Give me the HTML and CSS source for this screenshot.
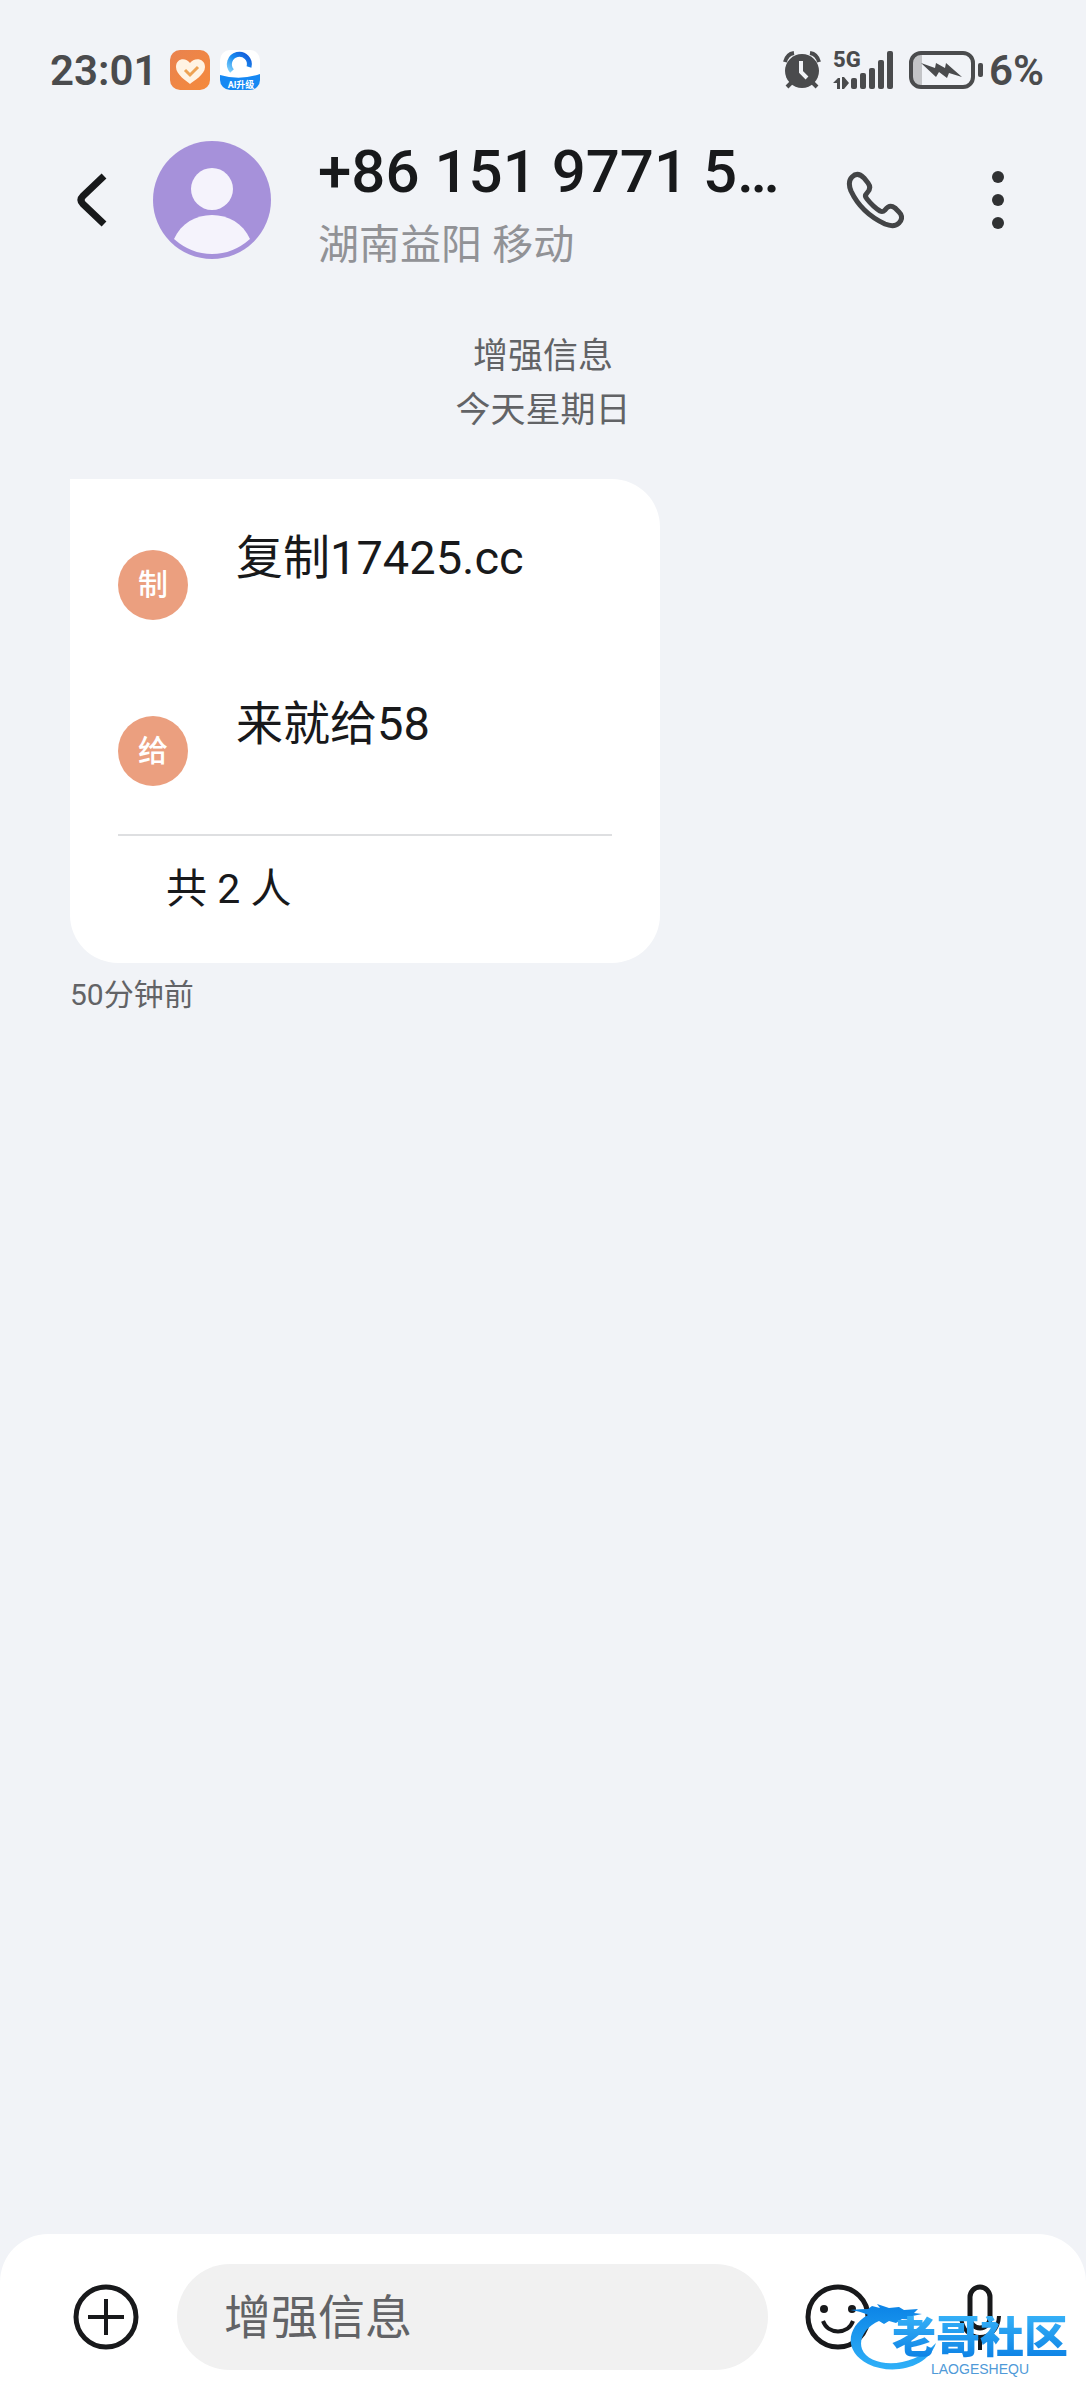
FILE: index.html
```html
<!DOCTYPE html>
<html lang="zh-CN">
<head>
<meta charset="utf-8">
<meta name="viewport" content="width=device-width, initial-scale=1">
<title>信息</title>
<link rel="stylesheet" href="styles.css">
</head>
<body>
<div class="screen">
  <div class="status">
    <span class="clock">23:01</span>
    <svg class="app-icon" width="40" height="40" viewBox="0 0 40 40" aria-hidden="true">
      <defs><linearGradient id="orange" x1="0" y1="0" x2="1" y2="1"><stop offset="0" stop-color="#e9824f"/><stop offset="1" stop-color="#f58a3c"/></linearGradient></defs>
      <rect width="40" height="40" rx="10" fill="url(#orange)"/>
      <path d="M20 34C17 31 6 25 6 17c0-9 10-10 14-4 4-6 15-5 15 4 0 8-12 14-15 17z" fill="#fff3e3"/>
      <path d="M15 20l5 5 8-8" fill="none" stroke="#eda253" stroke-width="3"/>
    </svg>
    <svg class="app-icon" width="40" height="40" viewBox="0 0 40 40" aria-hidden="true">
      <defs><clipPath id="tile"><rect width="40" height="40" rx="10"/></clipPath>
      <linearGradient id="ring" x1="0" y1="1" x2="1" y2="0"><stop offset="0" stop-color="#7fd0fb"/><stop offset=".5" stop-color="#1a8cf0"/><stop offset="1" stop-color="#1458d8"/></linearGradient></defs>
      <g clip-path="url(#tile)">
        <rect width="40" height="40" fill="#fff"/>
        <path d="M12 21A10 10 0 1 1 29 17" fill="none" stroke="url(#ring)" stroke-width="5"/>
        <path d="M0 25Q20 31 40 24V40H0z" fill="#1688f3"/>
        <text x="21" y="38" text-anchor="middle" class="tile-text">AI升级</text>
      </g>
    </svg>
    <span class="spacer"></span>
    <svg width="38" height="38" viewBox="0 0 38 38" aria-hidden="true">
      <circle cx="19" cy="20" r="17" fill="#4a4b4d"/>
      <path d="M2 11Q4 3 11 2M27 2q7 1 9 9M8 32l-4 4M30 32l4 4" stroke="#4a4b4d" stroke-width="4" fill="none"/>
      <path d="M18 10v11l6 6" stroke="#f1f3f7" stroke-width="4" fill="none"/>
    </svg>
    <div class="signal">
      <span class="net">5G</span>
      <svg width="62" height="38" viewBox="0 0 62 38" aria-hidden="true">
        <g fill="#4a4b4d"><path d="M0 32l5-5h2v11H4v-6zM9 26h2l5 6-5 6H9z"/>
        <rect x="18" y="27" width="6" height="11" rx="2"/><rect x="27" y="22" width="6" height="16" rx="2"/><rect x="36" y="17" width="6" height="21" rx="2"/><rect x="45" y="9" width="6" height="29" rx="2"/><rect x="54" y="0" width="6" height="38" rx="2"/></g>
      </svg>
    </div>
    <svg width="74" height="38" viewBox="0 0 74 38" aria-hidden="true">
      <path d="M4 4h9v30H4z" fill="#c3c4c7"/>
      <rect x="2" y="2" width="62" height="34" rx="10" fill="none" stroke="#4a4b4d" stroke-width="4"/>
      <path d="M12 12l14 5 1-5 9 5 1-5 16 14-13-4-2 5-8-6-3 5z" fill="#4a4b4d"/>
      <rect x="69" y="12" width="5" height="14" rx="2" fill="#4a4b4d"/>
    </svg>
    <span class="percent">6%</span>
  </div>

  <header class="header">
    <button class="icon-btn" aria-label="返回">
      <svg width="32" height="54" viewBox="0 0 32 54"><path d="M27 3L6 23q-4 4 0 8l21 20" fill="none" stroke="#18191b" stroke-width="7"/></svg>
    </button>
    <svg class="avatar" width="118" height="118" viewBox="0 0 118 118" aria-hidden="true">
      <circle cx="59" cy="59" r="59" fill="#a691da"/>
      <circle cx="59" cy="48" r="21" fill="#f5f3fc"/>
      <path d="M21 98C28 82 43 74 59 74s31 8 38 24Q80 113 59 113T21 98z" fill="#f5f3fc"/>
    </svg>
    <div class="contact">
      <h1 class="number">+86 151 9771 5…</h1>
      <p class="place">湖南益阳 移动</p>
    </div>
    <button class="icon-btn" aria-label="拨打电话">
      <svg width="58" height="58" viewBox="0 0 58 58"><path d="M6 6C10 2 14 3 18 7l4 5c3 4 2 7-1 10-2 2-2 4 0 6 4 5 8 9 13 12 2 1 3 1 5-1 3-4 6-5 10-2l4 4c4 4 3 8 0 11-4 4-9 3-14 1C24 46 12 35 5 20 3 15 2 10 6 6z" fill="none" stroke="#434446" stroke-width="5"/></svg>
    </button>
    <button class="icon-btn more" aria-label="更多">
      <svg width="12" height="58" viewBox="0 0 12 58" fill="#303133"><circle cx="6" cy="6" r="6"/><circle cx="6" cy="29" r="6"/><circle cx="6" cy="52" r="6"/></svg>
    </button>
  </header>

  <main class="thread">
    <div class="day"><p>增强信息</p><p>今天星期日</p></div>
    <section class="bubble">
      <ul class="people">
        <li class="person"><span class="badge">制</span><span class="name">复制17425.cc</span></li>
        <li class="person"><span class="badge">给</span><span class="name">来就给58</span></li>
      </ul>
      <p class="total">共 2 人</p>
    </section>
    <p class="ago">50分钟前</p>
  </main>

  <footer class="composer">
    <button class="icon-btn" aria-label="添加">
      <svg width="66" height="66" viewBox="0 0 66 66" fill="none" stroke="#18191b"><circle cx="33" cy="33" r="30" stroke-width="5"/><path d="M33 15v36M15 33h36" stroke-width="4"/></svg>
    </button>
    <input class="field" type="text" placeholder="增强信息" aria-label="增强信息">
    <button class="icon-btn" aria-label="表情">
      <svg width="66" height="66" viewBox="0 0 66 66"><circle cx="33" cy="33" r="30" fill="none" stroke="#18191b" stroke-width="5"/><circle cx="19" cy="25" r="4" fill="#18191b"/><circle cx="47" cy="25" r="4" fill="#18191b"/><path d="M18 37c5 14 25 14 30 0" fill="none" stroke="#18191b" stroke-width="4"/></svg>
    </button>
    <button class="icon-btn mic" aria-label="语音">
      <svg width="44" height="66" viewBox="0 0 44 66" fill="none" stroke="#18191b"><rect x="12" y="3" width="20" height="41" rx="10" stroke-width="5"/><path d="M3 32c1 28 37 28 38 0M22 52v14" stroke-width="4"/></svg>
    </button>
    <div class="mark">
      <svg class="swirl" width="90" height="72" viewBox="0 0 90 72" aria-hidden="true">
        <defs><linearGradient id="sea" x1="0" y1="0" x2="0" y2="1"><stop offset="0" stop-color="#0b83e6"/><stop offset="1" stop-color="#2fb0f8"/></linearGradient></defs>
        <path fill="url(#sea)" d="M0 8q10-1 18-1l4-3 8 2-3-4 12 4 10-1 5 3 14-1-4 4 8 1-14 3 6 3-12-1-6 4-7-2-5 3-5-3C17 24 8 36 12 47c7 18 48 22 74-6C78 66 42 74 18 62-8 48-2 24 18 13Q10 9 0 8z"/>
      </svg>
      <div class="mark-text"><span class="mark-name">老哥社区</span><span class="mark-sub">LAOGESHEQU</span></div>
    </div>
  </footer>
</div>
</body>
</html>
```
FILE: styles.css
```css
* { box-sizing: border-box; }
body, h1, p, ul { margin: 0; padding: 0; }
body {
  background: #f1f3f7;
  color: #18191b;
  font-family: Roboto, "Noto Sans CJK SC", sans-serif;
}
svg { display: block; flex: none; }
.screen { display: flex; flex-direction: column; min-height: 100vh; }

.status {
  display: flex;
  align-items: center;
  height: 100px;
  margin-top: 20px;
  padding: 0 42px 0 50px;
  color: #4a4b4d;
  font-size: 42px;
  font-weight: 600;
}
.clock { margin-right: 13px; }
.app-icon { margin-right: 10px; }
.tile-text { font-size: 9px; font-weight: 700; fill: #fff; }
.spacer { flex: 1; }
.signal { position: relative; margin: 0 14px 0 12px; }
.net { position: absolute; left: 0; top: -3px; font-size: 22px; line-height: 24px; font-weight: 800; }
.percent { margin-left: 6px; }

.icon-btn { flex: none; padding: 0; border: 0; background: none; cursor: pointer; }
.header {
  display: flex;
  align-items: center;
  height: 160px;
  padding: 0 82px 0 77px;
}
.avatar { margin: 0 47px 0 44px; }
.contact { flex: 1; min-width: 0; padding-top: 10px; }
.number {
  font-size: 60px;
  line-height: 72px;
  font-weight: 500;
  white-space: nowrap;
}
.place { margin-top: 7px; font-size: 41px; line-height: 60px; color: #919296; }
.more { margin-left: 88px; }

.thread { flex: 1; padding: 50px 70px 0; }
.day { text-align: center; font-size: 35px; line-height: 54px; color: #626366; }
.bubble {
  width: 590px;
  max-width: 100%;
  margin-top: 41px;
  padding: 23px 48px 44px;
  background: #fff;
  border-radius: 0 48px 48px 48px;
}
.people { list-style: none; border-bottom: 2px solid #dedfe1; }
.person { display: flex; align-items: center; gap: 48px; height: 166px; }
.badge {
  display: grid;
  place-items: center;
  width: 70px;
  height: 70px;
  border-radius: 50%;
  background: #eb9f7f;
  color: #fff;
  font-size: 30px;
  line-height: 30px;
  font-weight: 500;
}
.name { padding-bottom: 54px; font-size: 47px; line-height: 56px; }
.total { padding: 23px 48px 0; font-size: 41px; line-height: 60px; }
.ago { margin-top: 10px; font-size: 30px; line-height: 44px; color: #626366; }

.composer {
  position: relative;
  display: flex;
  align-items: center;
  padding: 30px 84px 30px 73px;
  background: #fff;
  border-radius: 48px 48px 0 0;
}
.field {
  flex: 1;
  min-width: 0;
  height: 106px;
  margin: 0 37px 0 38px;
  padding: 0 47px;
  border: 0;
  border-radius: 53px;
  background: #f1f1f1;
  color: #18191b;
  font: inherit;
  font-size: 47px;
}
.field::placeholder { color: #626366; opacity: 1; }
.mic { margin-left: 87px; }

.mark {
  position: absolute;
  right: 18px;
  bottom: 26px;
  width: 218px;
  height: 72px;
  pointer-events: none;
}
.mark-text {
  position: absolute;
  right: 0;
  top: 14px;
  display: flex;
  flex-direction: column;
  align-items: center;
}
.mark-name {
  font-size: 44px;
  line-height: 44px;
  font-weight: 900;
  background: linear-gradient(#35b0f7, #0b80e4);
  background-clip: text;
  color: transparent;
}
.mark-sub { font-family: "Liberation Sans", sans-serif; font-size: 14px; line-height: 18px; color: #4f9ad8; }
```
